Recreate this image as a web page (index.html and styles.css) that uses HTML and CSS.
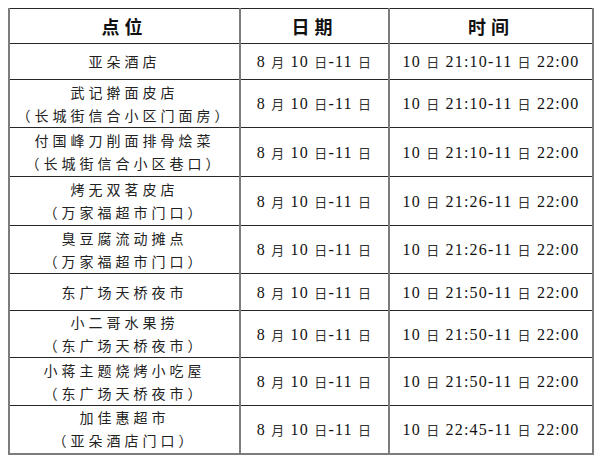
FILE: index.html
```html
<!DOCTYPE html>
<html lang="zh">
<head>
<meta charset="utf-8">
<link rel="stylesheet" href="styles.css">
</head>
<body>
<table class="sched">
  <colgroup><col class="c1"><col class="c2"><col class="c3"></colgroup>
  <thead>
    <tr class="h-head"><th>点位</th><th>日期</th><th>时间</th></tr>
  </thead>
  <tbody>
    <tr class="h-one"><td class="place">亚朵酒店</td><td class="num">8 <span class="cj">月</span> 10 <span class="cj">日</span>-11 <span class="cj">日</span></td><td class="num">10 <span class="cj">日</span> 21:10-11 <span class="cj">日</span> 22:00</td></tr>
    <tr class="h-two"><td class="place">武记擀面皮店<br>（长城街信合小区门面房）</td><td class="num">8 <span class="cj">月</span> 10 <span class="cj">日</span>-11 <span class="cj">日</span></td><td class="num">10 <span class="cj">日</span> 21:10-11 <span class="cj">日</span> 22:00</td></tr>
    <tr class="h-two b"><td class="place">付国峰刀削面排骨烩菜<br>（长城街信合小区巷口）</td><td class="num">8 <span class="cj">月</span> 10 <span class="cj">日</span>-11 <span class="cj">日</span></td><td class="num">10 <span class="cj">日</span> 21:10-11 <span class="cj">日</span> 22:00</td></tr>
    <tr class="h-two b"><td class="place">烤无双茗皮店<br>（万家福超市门口）</td><td class="num">8 <span class="cj">月</span> 10 <span class="cj">日</span>-11 <span class="cj">日</span></td><td class="num">10 <span class="cj">日</span> 21:26-11 <span class="cj">日</span> 22:00</td></tr>
    <tr class="h-two"><td class="place">臭豆腐流动摊点<br>（万家福超市门口）</td><td class="num">8 <span class="cj">月</span> 10 <span class="cj">日</span>-11 <span class="cj">日</span></td><td class="num">10 <span class="cj">日</span> 21:26-11 <span class="cj">日</span> 22:00</td></tr>
    <tr class="h-one b"><td class="place">东广场天桥夜市</td><td class="num">8 <span class="cj">月</span> 10 <span class="cj">日</span>-11 <span class="cj">日</span></td><td class="num">10 <span class="cj">日</span> 21:50-11 <span class="cj">日</span> 22:00</td></tr>
    <tr class="h-two s"><td class="place">小二哥水果捞<br>（东广场天桥夜市）</td><td class="num">8 <span class="cj">月</span> 10 <span class="cj">日</span>-11 <span class="cj">日</span></td><td class="num">10 <span class="cj">日</span> 21:50-11 <span class="cj">日</span> 22:00</td></tr>
    <tr class="h-two"><td class="place">小蒋主题烧烤小吃屋<br>（东广场天桥夜市）</td><td class="num">8 <span class="cj">月</span> 10 <span class="cj">日</span>-11 <span class="cj">日</span></td><td class="num">10 <span class="cj">日</span> 21:50-11 <span class="cj">日</span> 22:00</td></tr>
    <tr class="h-two"><td class="place">加佳惠超市<br>（亚朵酒店门口）</td><td class="num">8 <span class="cj">月</span> 10 <span class="cj">日</span>-11 <span class="cj">日</span></td><td class="num">10 <span class="cj">日</span> 22:45-11 <span class="cj">日</span> 22:00</td></tr>
  </tbody>
</table>
</body>
</html>
```
FILE: styles.css
```css
html, body {
  margin: 0;
  padding: 0;
  background: #ffffff;
}
body {
  padding: 8px 0 0 8px;
  color: #1a1a1a;
  font-family: "Liberation Serif", "Noto Sans CJK SC", serif;
}
.sched {
  border-collapse: collapse;
  table-layout: fixed;
  width: 584px;
  border: 2px solid #7c7c7c;
  border-top: 1px solid #7c7c7c;
}
.c1 { width: 231px; }
.c2 { width: 149px; }
.c3 { width: 204px; }
.sched th,
.sched td {
  padding: 0;
  text-align: center;
  vertical-align: middle;
  border-top: 1px solid #262626;
  border-bottom: 1px solid #262626;
  border-left: 2px solid #7c7c7c;
  border-right: 2px solid #7c7c7c;
}
.sched th {
  font-family: "Noto Sans CJK SC", sans-serif;
  font-weight: 700;
  font-size: 18px;
  letter-spacing: 5px;
  color: #111;
}
.h-head { height: 35px; }
.h-one { height: 36px; }
.h-two { height: 48px; }
.h-two.b { height: 49px; }
.h-one.b { height: 37px; }
.h-two.s { height: 47px; }
.place {
  font-family: "Noto Sans CJK SC", sans-serif;
  font-size: 14px;
  letter-spacing: 4px;
  line-height: 23px;
  font-weight: 400;
  color: #222;
}
.num {
  font-size: 16px;
  letter-spacing: 1.2px;
  color: #111;
  white-space: nowrap;
}
.cj {
  font-family: "Noto Sans CJK SC", sans-serif;
  font-size: 13px;
  color: #333;
}
```
